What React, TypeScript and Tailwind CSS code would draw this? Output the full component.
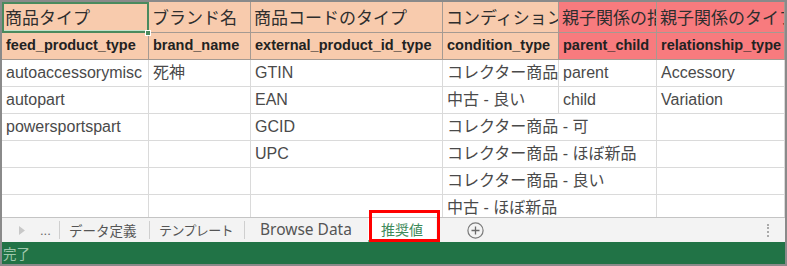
import React from 'react';

type Cell = { text?: string; span?: number };

const HEADER_JP = ['商品タイプ', 'ブランド名', '商品コードのタイプ', 'コンディション', '親子関係の指定', '親子関係のタイプ'];
const HEADER_EN = ['feed_product_type', 'brand_name', 'external_product_id_type', 'condition_type', 'parent_child', 'relationship_type'];

// data rows; span=2 lets condition text run over the empty next column like Excel does
const ROWS: Cell[][] = [
  [{ text: 'autoaccessorymisc' }, { text: '死神' }, { text: 'GTIN' }, { text: 'コレクター商品' }, { text: 'parent' }, { text: 'Accessory' }],
  [{ text: 'autopart' }, {}, { text: 'EAN' }, { text: '中古 - 良い' }, { text: 'child' }, { text: 'Variation' }],
  [{ text: 'powersportspart' }, {}, { text: 'GCID' }, { text: 'コレクター商品 - 可', span: 2 }, {}],
  [{}, {}, { text: 'UPC' }, { text: 'コレクター商品 - ほぼ新品', span: 2 }, {}],
  [{}, {}, {}, { text: 'コレクター商品 - 良い', span: 2 }, {}],
  [{}, {}, {}, { text: '中古 - ほぼ新品', span: 2 }, {}],
];

const headBg = (i: number) => (i >= 4 ? 'bg-[#f87b7e]' : 'bg-[#f8cbad]');

function Sep() {
  return <div className="w-px h-[18px] bg-[#cfcfcf] shrink-0" />;
}

export default function App() {
  return (
    <div className="relative w-[787px] h-[266px] border-2 border-[#8a8a8a] bg-white flex flex-col overflow-hidden font-['Liberation_Sans','Noto_Sans_CJK_JP',sans-serif]">
      {/* sheet grid */}
      <div className="relative h-[215px] overflow-hidden">
        <div className="grid grid-cols-[147px_102px_192px_116px_98px_128px] grid-rows-[31px_27px_27px_27px_27px_27px_27px_27px]">
          {HEADER_JP.map((h, i) => (
            <div
              key={'jp' + i}
              className={`${headBg(i)} border-r border-b border-[#a59a92] pl-[3px] flex items-center whitespace-nowrap overflow-hidden text-[17px] text-[#2e2e2e] font-['Noto_Sans_CJK_JP',sans-serif]`}
            >
              {h}
            </div>
          ))}
          {HEADER_EN.map((h, i) => (
            <div
              key={'en' + i}
              className={`${headBg(i)} border-r border-b border-[#a59a92] pl-[4px] flex items-center whitespace-nowrap overflow-hidden text-[14.5px] font-bold text-[#222]`}
            >
              {h}
            </div>
          ))}
          {ROWS.map((row, r) =>
            row.map((c, i) => (
              <div
                key={r + '-' + i}
                className={`${c.span === 2 ? 'col-span-2' : ''} border-r border-b border-[#dadada] pl-[4px] flex items-center whitespace-nowrap overflow-hidden text-[16px] text-[#4a4a4a]`}
              >
                {c.text}
              </div>
            ))
          )}
        </div>
        {/* selected cell A1 */}
        <div className="absolute left-0 top-0 w-[147px] h-[31px] border-2 border-[#4a8a5e]" />
        <div className="absolute left-[2px] top-[28px] w-[143px] h-px bg-[#bfe0c8]" />
        <div className="absolute left-[143px] top-[28px] w-[6px] h-[6px] bg-[#4a8a5e] border border-white" />
      </div>

      {/* sheet tabs */}
      <div className="h-[25px] bg-[#f3f3f3] border-t border-[#c4c4c4] flex items-center text-[#555] shrink-0">
        <svg className="ml-[17px] shrink-0" width="6" height="9" viewBox="0 0 6 9">
          <path d="M0 0 L6 4.5 L0 9 Z" fill="#c8c8c8" />
        </svg>
        <span className="ml-[15px] w-[15px] text-[13px] leading-none text-[#666]">...</span>
        <div className="ml-[4px]">
          <Sep />
        </div>
        <div className="w-[89px] pl-[9px] text-[13.5px] font-['Noto_Sans_CJK_JP',sans-serif] whitespace-nowrap">データ定義</div>
        <Sep />
        <div className="w-[94px] pl-[9px] text-[13px] font-['Noto_Sans_CJK_JP',sans-serif] whitespace-nowrap tracking-[-0.6px]">テンプレート</div>
        <Sep />
        <div className="w-[123px] pl-[15px] text-[15.5px] font-['Noto_Sans',sans-serif] whitespace-nowrap">Browse Data</div>
        <div className="w-[68px] h-full bg-white border-b-2 border-[#7fbf93] flex items-center justify-center text-[14px] text-[#3d8a5a] font-['Noto_Sans_CJK_JP',sans-serif]">
          推奨値
        </div>
        <svg className="ml-[31px] shrink-0" width="17" height="17" viewBox="0 0 17 17">
          <circle cx="8.5" cy="8.5" r="7.6" fill="none" stroke="#7a7a7a" strokeWidth="1.2" />
          <path d="M8.5 4.5 V12.5 M4.5 8.5 H12.5" stroke="#6a6a6a" strokeWidth="1.3" />
        </svg>
        <div className="flex-1" />
        <div className="mr-[16px] h-[13px] border-l-2 border-dotted border-[#aaa]" />
      </div>

      {/* status bar */}
      <div className="h-[22px] bg-[#217346] flex items-center shrink-0">
        <span className="pl-px text-[13.5px] text-[#9fc7ab] font-['Noto_Sans_CJK_JP',sans-serif]">完了</span>
      </div>

      {/* annotation box round the active tab */}
      <div className="absolute left-[367px] top-[208px] w-[71px] h-[32px] border-[3px] border-[#ff0000]" />
    </div>
  );
}
